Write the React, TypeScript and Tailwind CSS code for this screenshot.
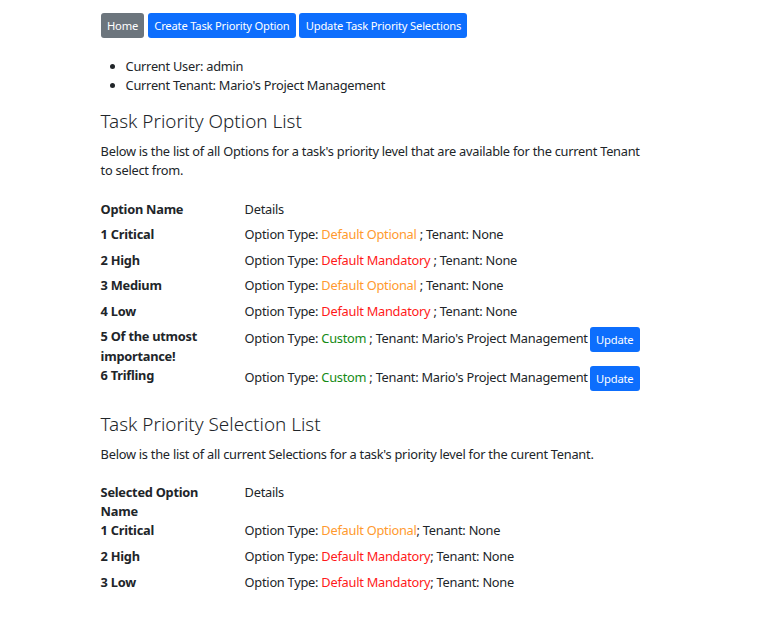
import React from 'react';

type Opt = { name: string; kind: 'optional' | 'mandatory' | 'custom'; tenant: string; canUpdate?: boolean };

const options: Opt[] = [
    { name: '1 Critical', kind: 'optional', tenant: 'None' },
    { name: '2 High', kind: 'mandatory', tenant: 'None' },
    { name: '3 Medium', kind: 'optional', tenant: 'None' },
    { name: '4 Low', kind: 'mandatory', tenant: 'None' },
    { name: '5 Of the utmost importance!', kind: 'custom', tenant: "Mario's Project Management", canUpdate: true },
    { name: '6 Trifling', kind: 'custom', tenant: "Mario's Project Management", canUpdate: true },
];

const selections: Opt[] = [
    { name: '1 Critical', kind: 'optional', tenant: 'None' },
    { name: '2 High', kind: 'mandatory', tenant: 'None' },
    { name: '3 Low', kind: 'mandatory', tenant: 'None' },
];

function Kind({ kind }: { kind: Opt['kind'] }) {
    if (kind === 'optional') return <span className="text-[#ff9a2e]">Default Optional</span>;
    if (kind === 'mandatory') return <span className="text-[#ff1a1a]">Default Mandatory</span>;
    return <span className="text-[#148a14]">Custom</span>;
}

function Row({ left, children }: { left: React.ReactNode; children: React.ReactNode }) {
    return (
        <div className="flex items-start">
            <div className="w-[144px] shrink-0 font-bold pr-[10px]">{left}</div>
            <div className="flex-1 pb-[6.4px]">{children}</div>
        </div>
    );
}

const btn = 'h-[24.8px] px-[6.4px] rounded-[3px] text-white text-[11.2px] tracking-[-0.2px]';

export default function App() {
    return (
        <div className="min-h-screen bg-white text-[#212529] text-[12.8px] leading-[19.2px] tracking-[-0.25px]" style={{ fontFamily: '"Noto Sans", sans-serif' }}>
            <div className="w-[576px] mx-auto px-[9.6px] pt-[12.8px]">
                {/* Nav buttons */}
                <div className="flex gap-[3.5px]">
                    <button className={`${btn} bg-[#6c757d]`}>Home</button>
                    <button className={`${btn} bg-[#0d6efd]`}>Create Task Priority Option</button>
                    <button className={`${btn} bg-[#0d6efd]`}>Update Task Priority Selections</button>
                </div>

                <ul className="list-disc pl-[25px] mt-[19px] mb-[12.8px]">
                    <li>Current User: admin</li>
                    <li>Current Tenant: Mario's Project Management</li>
                </ul>

                <h3 className="text-[18.9px] leading-[26.9px] font-light tracking-normal mb-[6.4px]">Task Priority Option List</h3>
                <p className="mb-[19px] pt-[1px] max-w-[546px]">
                    Below is the list of all Options for a task's priority level that are available for the current Tenant to select from.
                </p>

                <Row left="Option Name">Details</Row>
                {options.map((o) => (
                    <Row key={o.name} left={o.name}>
                        Option Type: <Kind kind={o.kind} /> ; Tenant: {o.tenant}
                        {o.canUpdate && (
                            <button className={`${btn} ml-[2px] bg-[#0d6efd] align-middle`}>Update</button>
                        )}
                    </Row>
                ))}

                <h3 className="text-[18.9px] leading-[26.9px] font-light tracking-normal mb-[6.4px] mt-[14px]">Task Priority Selection List</h3>
                <p className="mb-[18.5px] pt-[1px]">
                    Below is the list of all current Selections for a task's priority level for the curent Tenant.
                </p>

                <Row left="Selected Option Name">Details</Row>
                {selections.map((o) => (
                    <Row key={o.name} left={o.name}>
                        Option Type: <Kind kind={o.kind} />; Tenant: {o.tenant}
                    </Row>
                ))}
            </div>
        </div>
    );
}
